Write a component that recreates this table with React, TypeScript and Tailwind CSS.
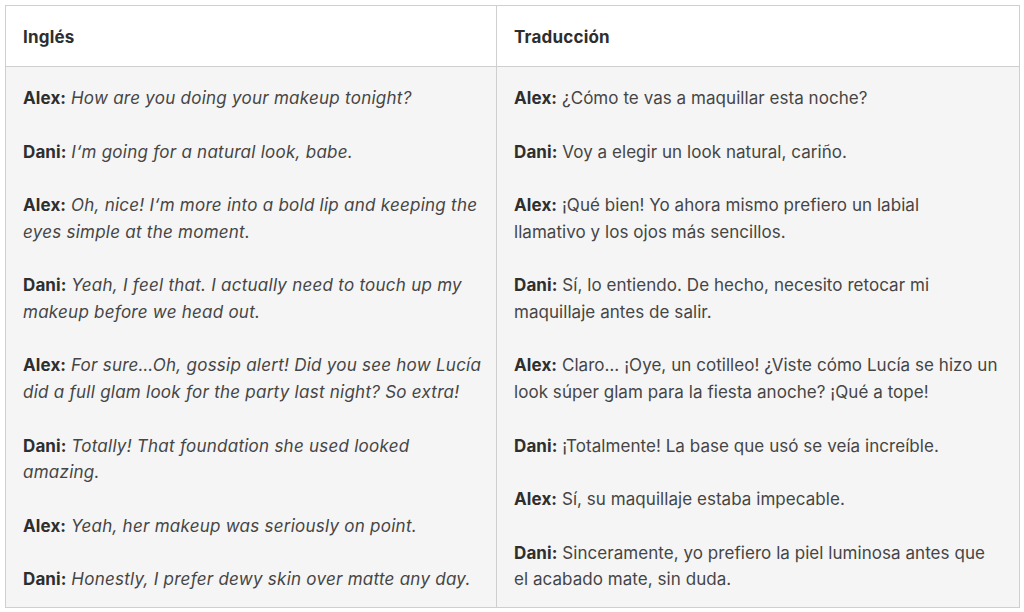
type Line = { who: string; text: string[] };

const english: Line[] = [
  { who: "Alex", text: ["How are you doing your makeup tonight?"] },
  { who: "Dani", text: ["I‘m going for a natural look, babe."] },
  { who: "Alex", text: ["Oh, nice! I‘m more into a bold lip and keeping the", "eyes simple at the moment."] },
  { who: "Dani", text: ["Yeah, I feel that. I actually need to touch up my", "makeup before we head out."] },
  { who: "Alex", text: ["For sure…Oh, gossip alert! Did you see how Lucía", "did a full glam look for the party last night? So extra!"] },
  { who: "Dani", text: ["Totally! That foundation she used looked", "amazing."] },
  { who: "Alex", text: ["Yeah, her makeup was seriously on point."] },
  { who: "Dani", text: ["Honestly, I prefer dewy skin over matte any day."] },
];

const spanish: Line[] = [
  { who: "Alex", text: ["¿Cómo te vas a maquillar esta noche?"] },
  { who: "Dani", text: ["Voy a elegir un look natural, cariño."] },
  { who: "Alex", text: ["¡Qué bien! Yo ahora mismo prefiero un labial", "llamativo y los ojos más sencillos."] },
  { who: "Dani", text: ["Sí, lo entiendo. De hecho, necesito retocar mi", "maquillaje antes de salir."] },
  { who: "Alex", text: ["Claro… ¡Oye, un cotilleo! ¿Viste cómo Lucía se hizo un", "look súper glam para la fiesta anoche? ¡Qué a tope!"] },
  { who: "Dani", text: ["¡Totalmente! La base que usó se veía increíble."] },
  { who: "Alex", text: ["Sí, su maquillaje estaba impecable."] },
  { who: "Dani", text: ["Sinceramente, yo prefiero la piel luminosa antes que", "el acabado mate, sin duda."] },
];

function Dialogue({ lines, italic }: { lines: Line[]; italic?: boolean }) {
  return (
    <div className="flex flex-col gap-[26.8px]">
      {lines.map((line, i) => (
        <p key={i} className="whitespace-nowrap">
          <strong className="font-bold tracking-[0.1px] text-[#2e2e2e]">{line.who}:</strong>{" "}
          <span className={italic ? "italic tracking-[0.25px]" : "tracking-[0.05px]"}>
            {line.text.map((t, j) => (
              <span key={j}>
                {j > 0 && <br />}
                {t}
              </span>
            ))}
          </span>
        </p>
      ))}
    </div>
  );
}

export default function App() {
  return (
    <div className="min-h-[612px] bg-white p-[5px] font-['Inter','Liberation_Sans',sans-serif] text-[#454545]">
      <table className="w-[1014px] table-fixed border-collapse">
        <colgroup>
          <col className="w-[491px]" />
          <col className="w-[523px]" />
        </colgroup>
        <thead>
          <tr className="bg-white">
            <th className="h-[61px] border border-[#cfcfcf] px-[17px] pt-[3px] text-left text-[17px] font-bold tracking-[0.2px] text-[#2e2e2e]">
              Inglés
            </th>
            <th className="h-[61px] border border-[#cfcfcf] px-[17px] pt-[3px] text-left text-[17px] font-bold tracking-[0.2px] text-[#2e2e2e]">
              Traducción
            </th>
          </tr>
        </thead>
        <tbody>
          <tr className="bg-[#f5f5f5] align-top text-[17px] leading-[26.7px]">
            <td className="border border-[#cfcfcf] px-[17px] pb-[14px] pt-[18px]">
              <Dialogue lines={english} italic />
            </td>
            <td className="border border-[#cfcfcf] px-[17px] pb-[14px] pt-[18px]">
              <Dialogue lines={spanish} />
            </td>
          </tr>
        </tbody>
      </table>
    </div>
  );
}
